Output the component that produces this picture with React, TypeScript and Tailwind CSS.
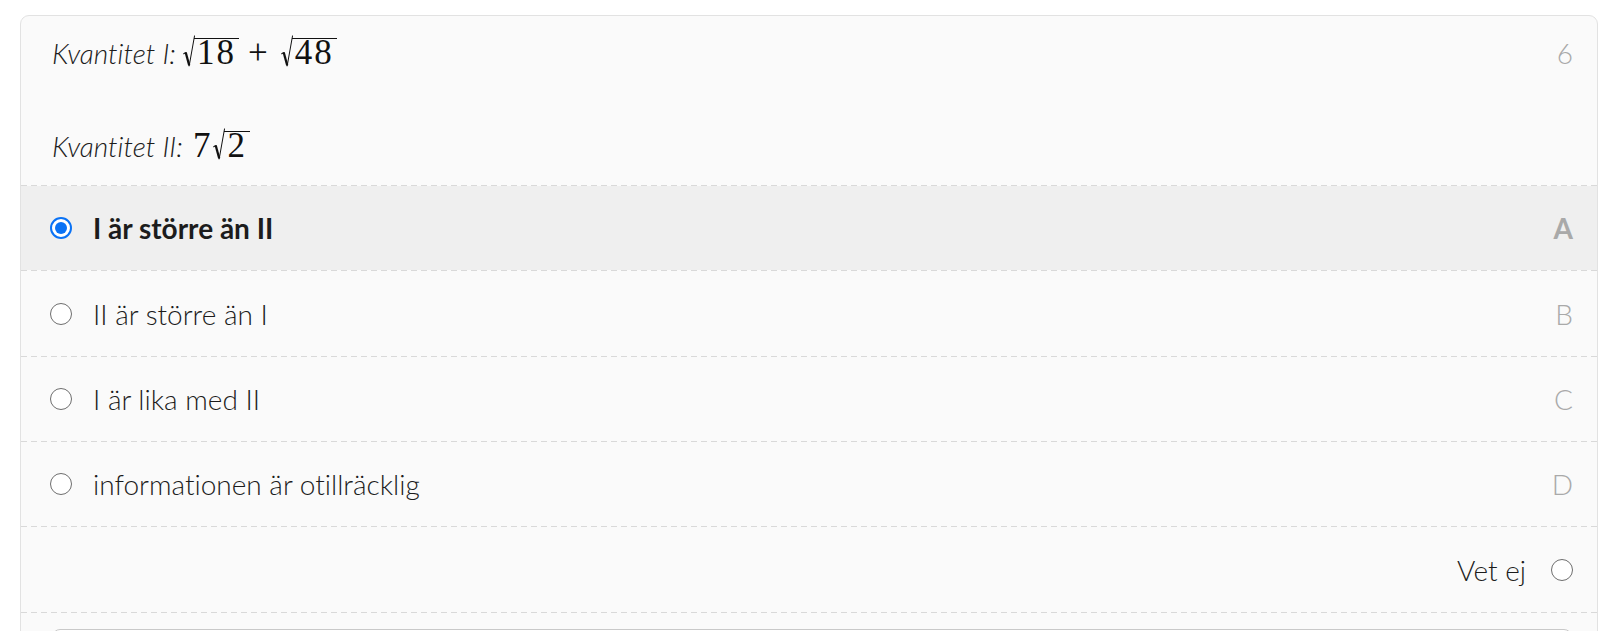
const lato = { fontFamily: "Lato, 'Noto Sans', sans-serif" };

function Radical({ children }: { children: React.ReactNode }) {
  return (
    <span className="relative inline-block pl-[11px]">
      <svg
        className="absolute left-0 top-0 h-[32px] w-[12px]"
        viewBox="0 0 12 32"
        fill="none"
        stroke="#111"
      >
        <path d="M0.4 19 L2.8 17.4" strokeWidth="1.1" />
        <path d="M2.7 17.4 L6.2 30.4" strokeWidth="2.2" />
        <path d="M6.1 31.3 L11.6 0.5" strokeWidth="1" />
      </svg>
      <span className="inline-block border-t border-[#111] pl-[3px] pr-[3px] leading-[27px] tracking-[2px]">
        {children}
      </span>
    </span>
  );
}

function Math({ children }: { children: React.ReactNode }) {
  return (
    <span
      className="text-[35px] not-italic leading-none text-[#111]"
      style={{ fontFamily: "'Liberation Serif', 'DejaVu Serif', serif" }}
    >
      {children}
    </span>
  );
}

function Radio({ checked }: { checked?: boolean }) {
  if (checked) {
    return (
      <span className="flex h-[22px] w-[22px] shrink-0 items-center justify-center rounded-full border-2 border-[#0a72f5] bg-white">
        <span className="h-[12px] w-[12px] rounded-full bg-[#0a72f5]" />
      </span>
    );
  }
  return <span className="h-[22px] w-[22px] shrink-0 rounded-full border-[1.5px] border-[#6e6e6e] bg-white" />;
}

function Sep() {
  return <div className="h-px bg-[repeating-linear-gradient(to_right,#d9d9d9_0_6px,transparent_6px_10px)]" />;
}

const options = [
  { text: "I är större än II", letter: "A", h: "h-[84px]" },
  { text: "II är större än I", letter: "B", h: "h-[85px]" },
  { text: "I är lika med II", letter: "C", h: "h-[84px]" },
  { text: "informationen är otillräcklig", letter: "D", h: "h-[84px]" },
];

export default function App() {
  const selected = "A";
  return (
    <main
      className="min-h-screen bg-white pt-[15px] text-[#1c1c1c] [font-variant-ligatures:none]"
      style={lato}
    >
      <section className="ml-[20px] w-[1578px] rounded-t-[9px] border border-[#e2e2e2] bg-[#fafafa]">
        <div className="pb-[18px] pl-[31px] pr-[24px] pt-[16px] text-[28px] font-light">
          <div className="flex items-baseline justify-between leading-[42px]">
            <p>
              <span className="italic">Kvantitet I: </span>
              <Math>
                <Radical>18</Radical>
                <span className="pl-[9px] pr-[13px]">+</span>
                <Radical>48</Radical>
              </Math>
            </p>
            <span className="text-[#a9a9a9]">6</span>
          </div>
          <p className="mt-[51px] leading-[42px]">
            <span className="italic">Kvantitet II: </span>
            <Math>
              <span className="pl-[3px] pr-[3px]">7</span>
              <Radical>2</Radical>
            </Math>
          </p>
        </div>

        {options.map((o) => {
          const on = o.letter === selected;
          return (
            <div key={o.letter}>
              <Sep />
              <label
                className={`flex ${o.h} items-center pl-[29px] pr-[24px] text-[28px] ${
                  on ? "bg-[#efefef] font-bold" : "font-light"
                }`}
              >
                <Radio checked={on} />
                <span className="ml-[21px] flex-1">{o.text}</span>
                <span className="text-[#a9a9a9]">{o.letter}</span>
              </label>
            </div>
          );
        })}

        <Sep />
        <label className="flex h-[85px] items-center justify-end gap-[25px] pr-[24px] text-[28px] font-light">
          <span>Vet ej</span>
          <Radio />
        </label>
        <Sep />

        <div className="pb-[20px] pl-[31px] pr-[25px] pt-[16px]">
          <div className="h-[80px] rounded-[8px] border border-[#c9c9c9] bg-white" />
        </div>
      </section>
    </main>
  );
}
